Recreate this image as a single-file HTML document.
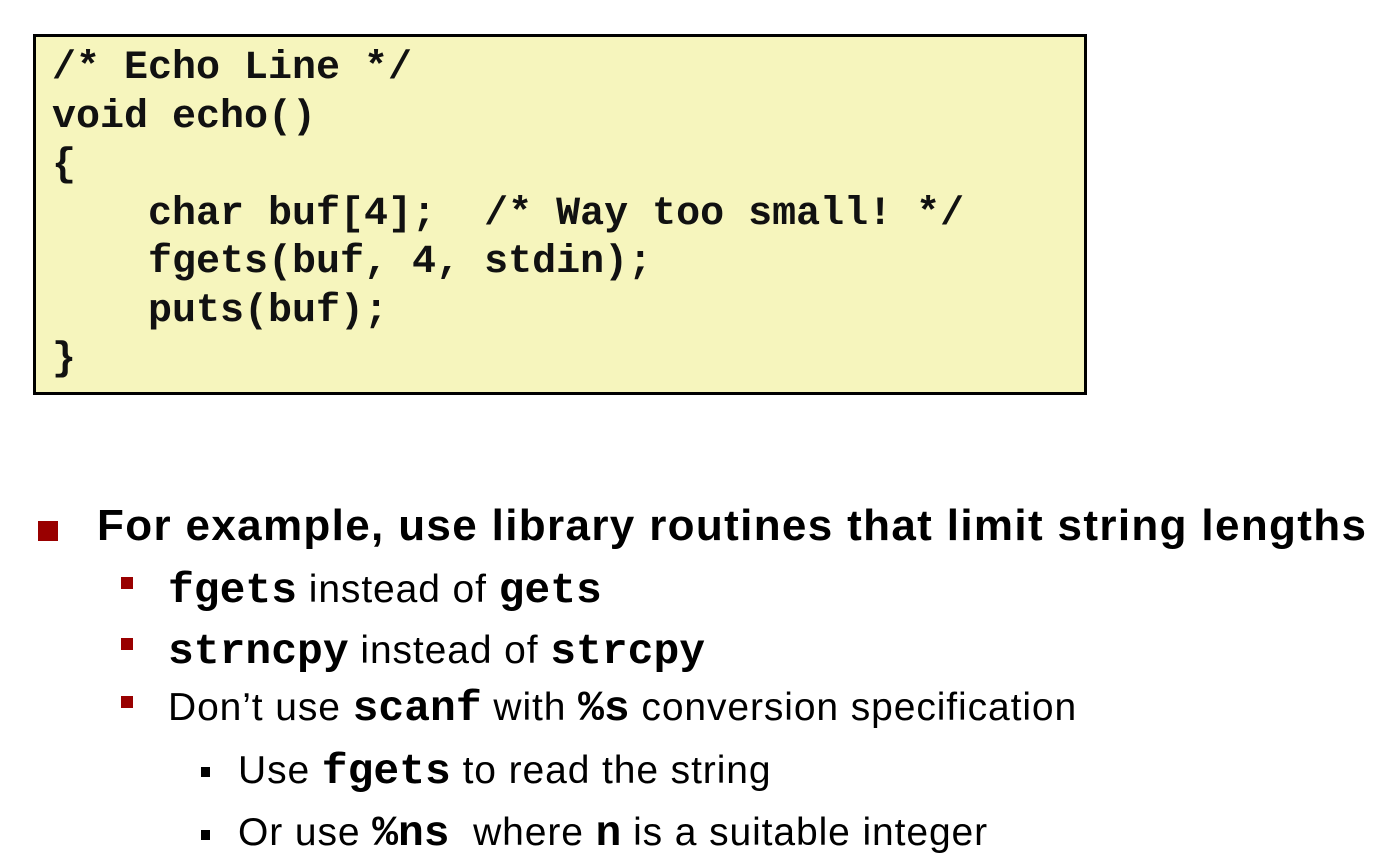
<!DOCTYPE html>
<html><head><meta charset="utf-8"><style>
body{margin:0;width:1377px;height:867px;background:#fff;position:relative;overflow:hidden;font-family:"Liberation Sans",sans-serif;color:#000}
.box{position:absolute;left:33px;top:34px;width:1048px;height:355px;border:3px solid #000;background:#f6f5bd}
pre{margin:0;padding:8px 0 0 16px;font-family:"Liberation Mono",monospace;font-weight:bold;font-size:40px;line-height:48.5px;color:#111}
.l{position:absolute;white-space:nowrap}
.m{font-family:"Liberation Mono",monospace;font-weight:bold;font-size:43px;letter-spacing:0}
.main{left:97px;top:504px;font-size:44px;font-weight:bold;letter-spacing:1.35px;line-height:44px}
.sub{font-size:39px;letter-spacing:0.9px;line-height:44px}
.sq{position:absolute;background:#990000}
.bk{position:absolute;background:#000}
</style></head><body>
<div class="box"><pre>/* Echo Line */
void echo()
{
    char buf[4];  /* Way too small! */
    fgets(buf, 4, stdin);
    puts(buf);
}</pre></div>
<div class="sq" style="left:38px;top:521px;width:20px;height:20px"></div>
<div class="l main">For example, use library routines that limit string lengths</div>
<div class="sq" style="left:121px;top:577px;width:12px;height:12px"></div>
<div class="l sub" style="left:168px;top:568px"><span class="m">fgets</span> instead of <span class="m">gets</span></div>
<div class="sq" style="left:121px;top:638px;width:12px;height:12px"></div>
<div class="l sub" style="left:168px;top:629px"><span class="m">strncpy</span> instead of <span class="m">strcpy</span></div>
<div class="sq" style="left:121px;top:696px;width:12px;height:12px"></div>
<div class="l sub" style="left:168px;top:686px">Don’t use <span class="m">scanf</span> with <span class="m">%s</span> conversion specification</div>
<div class="bk" style="left:201px;top:767px;width:9px;height:10px"></div>
<div class="l sub" style="left:238px;top:749px">Use <span class="m">fgets</span> to read the string</div>
<div class="bk" style="left:201px;top:830px;width:9px;height:10px"></div>
<div class="l sub" style="left:238px;top:811px">Or use <span class="m">%ns</span>&nbsp; where <span class="m">n</span> is a suitable integer</div>
</body></html>
